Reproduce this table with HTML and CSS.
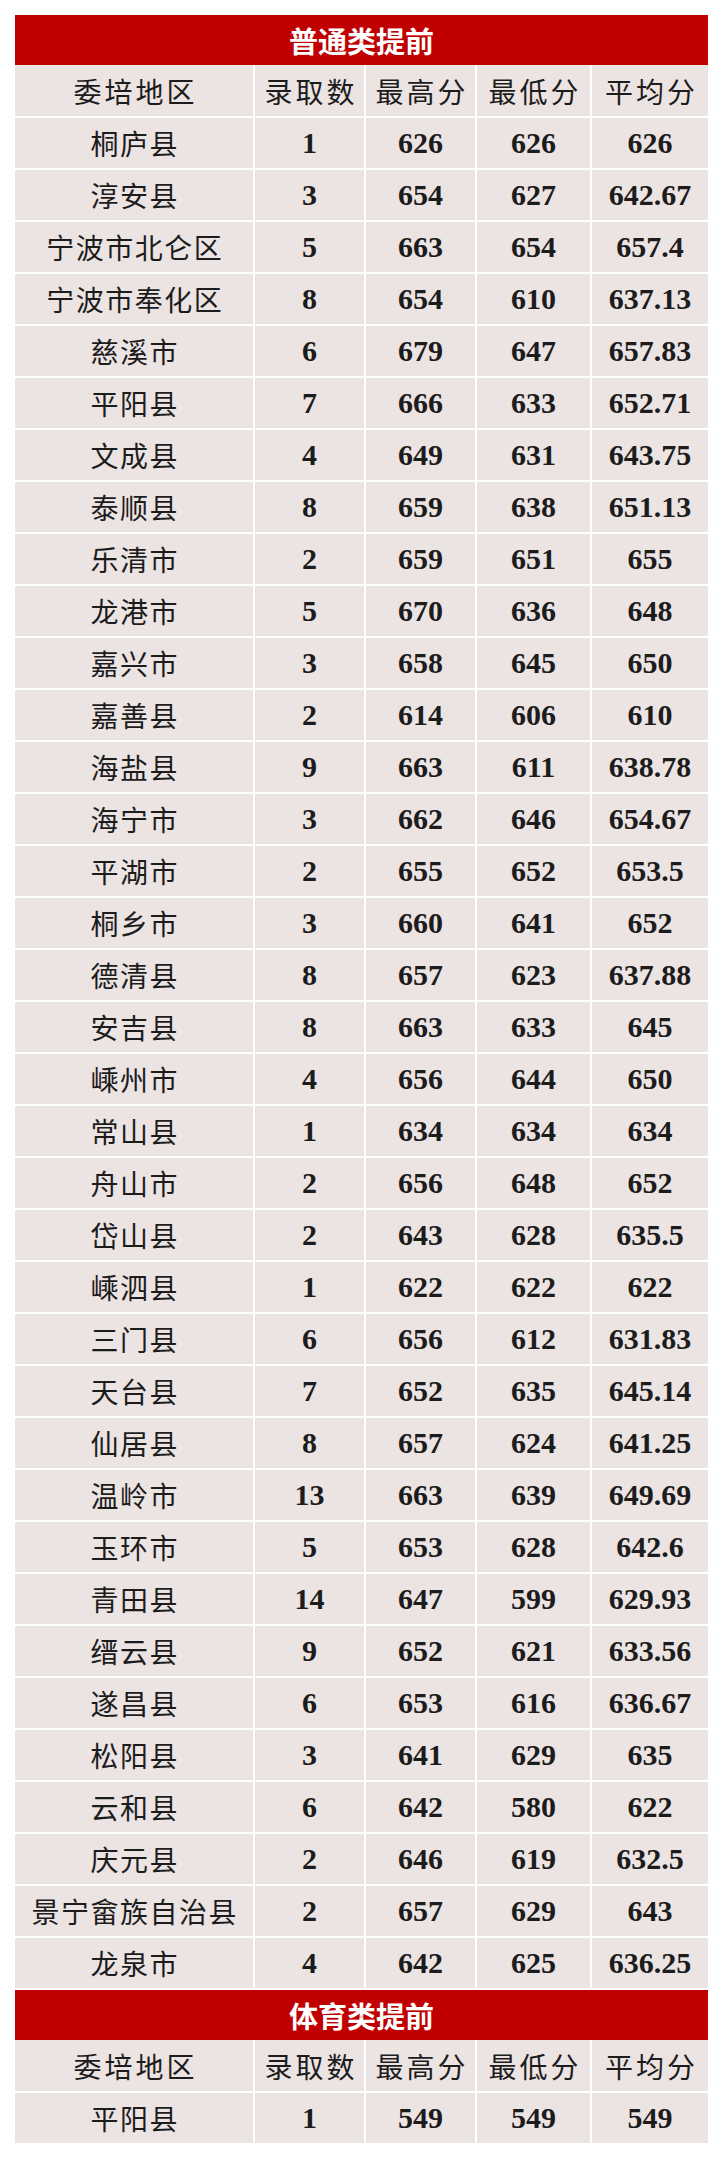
FILE: index.html
```html
<!DOCTYPE html>
<html lang="zh-CN">
<head>
<meta charset="utf-8">
<title>提前招生录取</title>
<link rel="stylesheet" href="styles.css">
</head>
<body>
<div class="page">
  <section class="section">
    <div class="title">普通类提前</div>
    <div class="grid">
      <div class="hd">委培地区</div><div class="hd">录取数</div><div class="hd">最高分</div><div class="hd">最低分</div><div class="hd">平均分</div>
      <div class="nm">桐庐县</div><div class="nu">1</div><div class="nu">626</div><div class="nu">626</div><div class="nu">626</div>
      <div class="nm">淳安县</div><div class="nu">3</div><div class="nu">654</div><div class="nu">627</div><div class="nu">642.67</div>
      <div class="nm">宁波市北仑区</div><div class="nu">5</div><div class="nu">663</div><div class="nu">654</div><div class="nu">657.4</div>
      <div class="nm">宁波市奉化区</div><div class="nu">8</div><div class="nu">654</div><div class="nu">610</div><div class="nu">637.13</div>
      <div class="nm">慈溪市</div><div class="nu">6</div><div class="nu">679</div><div class="nu">647</div><div class="nu">657.83</div>
      <div class="nm">平阳县</div><div class="nu">7</div><div class="nu">666</div><div class="nu">633</div><div class="nu">652.71</div>
      <div class="nm">文成县</div><div class="nu">4</div><div class="nu">649</div><div class="nu">631</div><div class="nu">643.75</div>
      <div class="nm">泰顺县</div><div class="nu">8</div><div class="nu">659</div><div class="nu">638</div><div class="nu">651.13</div>
      <div class="nm">乐清市</div><div class="nu">2</div><div class="nu">659</div><div class="nu">651</div><div class="nu">655</div>
      <div class="nm">龙港市</div><div class="nu">5</div><div class="nu">670</div><div class="nu">636</div><div class="nu">648</div>
      <div class="nm">嘉兴市</div><div class="nu">3</div><div class="nu">658</div><div class="nu">645</div><div class="nu">650</div>
      <div class="nm">嘉善县</div><div class="nu">2</div><div class="nu">614</div><div class="nu">606</div><div class="nu">610</div>
      <div class="nm">海盐县</div><div class="nu">9</div><div class="nu">663</div><div class="nu">611</div><div class="nu">638.78</div>
      <div class="nm">海宁市</div><div class="nu">3</div><div class="nu">662</div><div class="nu">646</div><div class="nu">654.67</div>
      <div class="nm">平湖市</div><div class="nu">2</div><div class="nu">655</div><div class="nu">652</div><div class="nu">653.5</div>
      <div class="nm">桐乡市</div><div class="nu">3</div><div class="nu">660</div><div class="nu">641</div><div class="nu">652</div>
      <div class="nm">德清县</div><div class="nu">8</div><div class="nu">657</div><div class="nu">623</div><div class="nu">637.88</div>
      <div class="nm">安吉县</div><div class="nu">8</div><div class="nu">663</div><div class="nu">633</div><div class="nu">645</div>
      <div class="nm">嵊州市</div><div class="nu">4</div><div class="nu">656</div><div class="nu">644</div><div class="nu">650</div>
      <div class="nm">常山县</div><div class="nu">1</div><div class="nu">634</div><div class="nu">634</div><div class="nu">634</div>
      <div class="nm">舟山市</div><div class="nu">2</div><div class="nu">656</div><div class="nu">648</div><div class="nu">652</div>
      <div class="nm">岱山县</div><div class="nu">2</div><div class="nu">643</div><div class="nu">628</div><div class="nu">635.5</div>
      <div class="nm">嵊泗县</div><div class="nu">1</div><div class="nu">622</div><div class="nu">622</div><div class="nu">622</div>
      <div class="nm">三门县</div><div class="nu">6</div><div class="nu">656</div><div class="nu">612</div><div class="nu">631.83</div>
      <div class="nm">天台县</div><div class="nu">7</div><div class="nu">652</div><div class="nu">635</div><div class="nu">645.14</div>
      <div class="nm">仙居县</div><div class="nu">8</div><div class="nu">657</div><div class="nu">624</div><div class="nu">641.25</div>
      <div class="nm">温岭市</div><div class="nu">13</div><div class="nu">663</div><div class="nu">639</div><div class="nu">649.69</div>
      <div class="nm">玉环市</div><div class="nu">5</div><div class="nu">653</div><div class="nu">628</div><div class="nu">642.6</div>
      <div class="nm">青田县</div><div class="nu">14</div><div class="nu">647</div><div class="nu">599</div><div class="nu">629.93</div>
      <div class="nm">缙云县</div><div class="nu">9</div><div class="nu">652</div><div class="nu">621</div><div class="nu">633.56</div>
      <div class="nm">遂昌县</div><div class="nu">6</div><div class="nu">653</div><div class="nu">616</div><div class="nu">636.67</div>
      <div class="nm">松阳县</div><div class="nu">3</div><div class="nu">641</div><div class="nu">629</div><div class="nu">635</div>
      <div class="nm">云和县</div><div class="nu">6</div><div class="nu">642</div><div class="nu">580</div><div class="nu">622</div>
      <div class="nm">庆元县</div><div class="nu">2</div><div class="nu">646</div><div class="nu">619</div><div class="nu">632.5</div>
      <div class="nm">景宁畲族自治县</div><div class="nu">2</div><div class="nu">657</div><div class="nu">629</div><div class="nu">643</div>
      <div class="nm">龙泉市</div><div class="nu">4</div><div class="nu">642</div><div class="nu">625</div><div class="nu">636.25</div>
    </div>
  </section>
  <section class="section section-next">
    <div class="title">体育类提前</div>
    <div class="grid">
      <div class="hd">委培地区</div><div class="hd">录取数</div><div class="hd">最高分</div><div class="hd">最低分</div><div class="hd">平均分</div>
      <div class="nm">平阳县</div><div class="nu">1</div><div class="nu">549</div><div class="nu">549</div><div class="nu">549</div>
    </div>
  </section>
</div>
</body>
</html>
```
FILE: styles.css
```css
html, body {
  margin: 0;
  padding: 0;
  background: #ffffff;
}

.page {
  padding: 15px 0 0 15px;
  width: 693px;
}

.section-next {
  margin-top: 2px;
}

.title {
  height: 50px;
  background: #c00000;
  color: #ffffff;
  display: flex;
  align-items: center;
  justify-content: center;
  font-family: "Liberation Serif", "Noto Sans CJK SC", serif;
  font-weight: 700;
  font-size: 29px;
}

.grid {
  display: grid;
  grid-template-columns: 238px 109px 109px 113px 116px;
  grid-template-rows: 51px;
  grid-auto-rows: 50px;
  gap: 2px;
  background: #ffffff;
}

.grid > div {
  background: #ece3e3;
  display: flex;
  align-items: center;
  justify-content: center;
  color: #1c1c1c;
  white-space: nowrap;
}

.hd {
  font-family: "Noto Sans CJK SC", sans-serif;
  font-size: 28px;
  font-weight: 400;
  letter-spacing: 3px;
  padding-left: 3px;
}

.nm {
  font-family: "Noto Sans CJK SC", sans-serif;
  font-size: 28px;
  font-weight: 400;
  letter-spacing: 1.5px;
  padding-left: 1.5px;
}

.nu {
  font-family: "Liberation Serif", serif;
  font-size: 30px;
  font-weight: 700;
  color: #111111;
}
```
